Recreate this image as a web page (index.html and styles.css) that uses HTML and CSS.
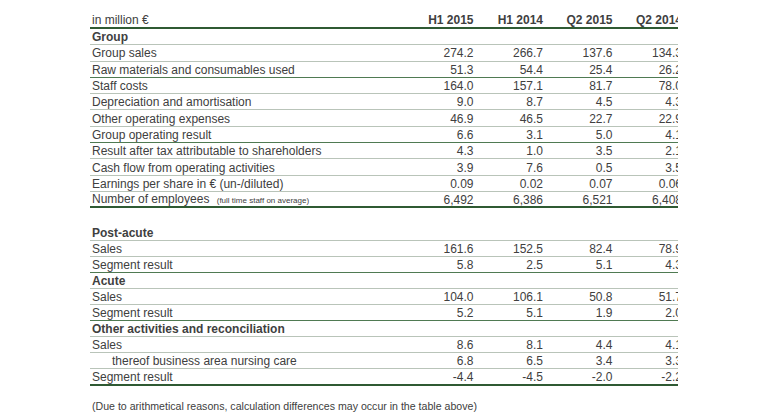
FILE: index.html
```html
<!DOCTYPE html>
<html>
<head>
<meta charset="utf-8">
<link rel="stylesheet" href="styles.css">
</head>
<body>
<div class="page">
  <div class="clip">
    <div class="tbl">
      <div class="row head"><span class="lbl">in million €</span><span class="num b">H1 2015</span><span class="num b">H1 2014</span><span class="num b">Q2 2015</span><span class="num b">Q2 2014</span></div>
      <div class="row"><span class="lbl b">Group</span></div>
      <div class="row"><span class="lbl">Group sales</span><span class="num">274.2</span><span class="num">266.7</span><span class="num">137.6</span><span class="num">134.3</span></div>
      <div class="row dark"><span class="lbl">Raw materials and consumables used</span><span class="num">51.3</span><span class="num">54.4</span><span class="num">25.4</span><span class="num">26.2</span></div>
      <div class="row"><span class="lbl">Staff costs</span><span class="num">164.0</span><span class="num">157.1</span><span class="num">81.7</span><span class="num">78.0</span></div>
      <div class="row"><span class="lbl">Depreciation and amortisation</span><span class="num">9.0</span><span class="num">8.7</span><span class="num">4.5</span><span class="num">4.3</span></div>
      <div class="row"><span class="lbl">Other operating expenses</span><span class="num">46.9</span><span class="num">46.5</span><span class="num">22.7</span><span class="num">22.9</span></div>
      <div class="row dark"><span class="lbl">Group operating result</span><span class="num">6.6</span><span class="num">3.1</span><span class="num">5.0</span><span class="num">4.1</span></div>
      <div class="row"><span class="lbl">Result after tax attributable to shareholders</span><span class="num">4.3</span><span class="num">1.0</span><span class="num">3.5</span><span class="num">2.1</span></div>
      <div class="row"><span class="lbl">Cash flow from operating activities</span><span class="num">3.9</span><span class="num">7.6</span><span class="num">0.5</span><span class="num">3.5</span></div>
      <div class="row"><span class="lbl">Earnings per share in € (un-/diluted)</span><span class="num">0.09</span><span class="num">0.02</span><span class="num">0.07</span><span class="num">0.06</span></div>
      <div class="row thick"><span class="lbl">Number of employees <span class="note">(full time staff on average)</span></span><span class="num">6,492</span><span class="num">6,386</span><span class="num">6,521</span><span class="num">6,408</span></div>
      <div class="row blank"></div>
      <div class="row s2"><span class="lbl b">Post-acute</span></div>
      <div class="row s2"><span class="lbl">Sales</span><span class="num">161.6</span><span class="num">152.5</span><span class="num">82.4</span><span class="num">78.9</span></div>
      <div class="row s2 dark"><span class="lbl">Segment result</span><span class="num">5.8</span><span class="num">2.5</span><span class="num">5.1</span><span class="num">4.3</span></div>
      <div class="row s2"><span class="lbl b">Acute</span></div>
      <div class="row s2"><span class="lbl">Sales</span><span class="num">104.0</span><span class="num">106.1</span><span class="num">50.8</span><span class="num">51.7</span></div>
      <div class="row s2 dark"><span class="lbl">Segment result</span><span class="num">5.2</span><span class="num">5.1</span><span class="num">1.9</span><span class="num">2.0</span></div>
      <div class="row s2"><span class="lbl b">Other activities and reconciliation</span></div>
      <div class="row s2"><span class="lbl">Sales</span><span class="num">8.6</span><span class="num">8.1</span><span class="num">4.4</span><span class="num">4.1</span></div>
      <div class="row s2"><span class="lbl indent">thereof business area nursing care</span><span class="num">6.8</span><span class="num">6.5</span><span class="num">3.4</span><span class="num">3.3</span></div>
      <div class="row s2 thick"><span class="lbl">Segment result</span><span class="num">-4.4</span><span class="num">-4.5</span><span class="num">-2.0</span><span class="num">-2.2</span></div>
    </div>
  </div>
  <p class="foot">(Due to arithmetical reasons, calculation differences may occur in the table above)</p>
</div>
</body>
</html>
```

FILE: styles.css
```css
html, body {
  margin: 0;
  padding: 0;
  background: #ffffff;
}
.page {
  padding: 12px 0 0 90px;
  font-family: "Liberation Sans", Arial, sans-serif;
  color: #404040;
}
.clip {
  width: 588px;
  overflow: hidden;
}
.tbl {
  width: 592px;
  display: flex;
  flex-direction: column;
}
.row {
  display: flex;
  align-items: center;
  height: 16.3px;
  box-sizing: border-box;
  padding-top: 1px;
  border-bottom: 1px solid #b9c4b9;
  font-size: 12px;
  line-height: 14px;
  white-space: nowrap;
}
.row.s2 {
  height: 16.1px;
}
.row.head {
  height: 17px;
  border-bottom: 2px solid #2f5a33;
}
.row.dark {
  border-bottom: 1px solid #4f7a52;
}
.row.thick {
  border-bottom: 2px solid #2f5a33;
}
.row.blank {
  border-bottom: none;
}
.lbl {
  width: 314px;
  padding-left: 2px;
  box-sizing: border-box;
  flex: none;
}
.num {
  width: 69.5px;
  text-align: right;
  flex: none;
}
.b {
  font-weight: bold;
}
.indent {
  padding-left: 22px;
}
.note {
  font-size: 8px;
  margin-left: 4px;
}
.foot {
  margin: 14px 0 0 2px;
  font-size: 10.6px;
  color: #404040;
}
```
